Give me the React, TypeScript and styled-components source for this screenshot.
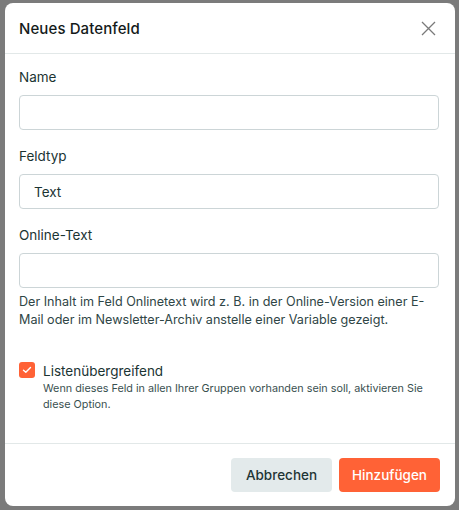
import React from "react";
import styled, { createGlobalStyle } from "styled-components";

const GlobalStyle = createGlobalStyle`
  html, body {
    margin: 0;
    padding: 0;
    background: #7b7b7b;
  }
  * { box-sizing: border-box; }
  body {
    font-family: Inter, "Noto Sans", sans-serif;
  }
`;

const Backdrop = styled.div`
  width: 459px;
  height: 510px;
  padding: 3px 4px 4px 5px;
  background: #7b7b7b;
`;

const Modal = styled.div`
  width: 450px;
  height: 503px;
  background: #fff;
  border-radius: 8px;
  display: flex;
  flex-direction: column;
  overflow: hidden;
`;

const Header = styled.div`
  height: 51px;
  padding: 0 14px;
  display: flex;
  align-items: center;
  justify-content: space-between;
  border-bottom: 1px solid #e2e8e8;
`;

const Title = styled.h2`
  margin: 0;
  font-size: 15px;
  font-weight: 500;
  color: #141a1a;
  letter-spacing: 0.1px;
`;

const CloseButton = styled.button`
  border: 0;
  background: none;
  padding: 0;
  width: 18px;
  height: 18px;
  display: flex;
  align-items: center;
  justify-content: center;
  cursor: pointer;
  margin-right: 4px;
`;

const Body = styled.div`
  flex: 1;
  padding: 13px 16px 0 14px;
  display: flex;
  flex-direction: column;
`;

const Field = styled.div`
  display: flex;
  flex-direction: column;
  margin-bottom: 16px;
`;

const Label = styled.label`
  font-size: 13.5px;
  color: #1b3433;
  line-height: 20px;
  margin-bottom: 8px;
`;

const Input = styled.div`
  height: 35px;
  border: 1px solid #ccd5d7;
  border-radius: 4px;
  padding: 0 14px;
  display: flex;
  align-items: center;
  font-size: 13.5px;
  color: #1b3433;
`;

const Help = styled.p`
  margin: 5px 0 0;
  font-size: 12.6px;
  line-height: 18px;
  color: #2f4646;
`;

const CheckRow = styled.div`
  display: flex;
  align-items: flex-start;
  gap: 8px;
  margin-top: 16px;
`;

const Box = styled.span<{ $checked: boolean }>`
  width: 16px;
  height: 16px;
  border-radius: 3px;
  flex-shrink: 0;
  margin-top: 1px;
  background: ${(p) => (p.$checked ? "#ff6236" : "#fff")};
  display: flex;
  align-items: center;
  justify-content: center;
`;

const CheckText = styled.div`
  display: flex;
  flex-direction: column;
`;

const CheckLabel = styled.span`
  font-size: 13.5px;
  line-height: 20px;
  color: #1b3433;
`;

const CheckDesc = styled.span`
  font-size: 10.8px;
  line-height: 16px;
  color: #3a5050;
`;

const Footer = styled.div`
  height: 63px;
  border-top: 1px solid #e2e8e8;
  display: flex;
  justify-content: flex-end;
  align-items: flex-start;
  gap: 7px;
  padding: 14px 15px 0;
`;

const Button = styled.button<{ $primary?: boolean }>`
  height: 34px;
  min-width: 101px;
  padding: 0 12px;
  border: 0;
  border-radius: 4px;
  font-family: inherit;
  font-size: 13.5px;
  font-weight: 500;
  cursor: pointer;
  background: ${(p) => (p.$primary ? "#ff6236" : "#e3eaeb")};
  color: ${(p) => (p.$primary ? "#fff" : "#1f3535")};
`;

export default function App() {
  return (
    <>
      <GlobalStyle />
      <Backdrop>
        <Modal>
          <Header>
            <Title>Neues Datenfeld</Title>
            <CloseButton aria-label="Schließen">
              <svg width="15" height="15" viewBox="0 0 15 15">
                <path d="M1 1L14 14M14 1L1 14" stroke="#7a7a7a" strokeWidth="1.3" fill="none" />
              </svg>
            </CloseButton>
          </Header>
          <Body>
            <Field>
              <Label>Name</Label>
              <Input />
            </Field>
            <Field>
              <Label>Feldtyp</Label>
              <Input>Text</Input>
            </Field>
            <Field>
              <Label>Online-Text</Label>
              <Input />
              <Help>
                Der Inhalt im Feld Onlinetext wird z. B. in der Online-Version einer E-Mail oder im
                Newsletter-Archiv anstelle einer Variable gezeigt.
              </Help>
            </Field>
            <CheckRow>
              <Box $checked>
                <svg width="10" height="8" viewBox="0 0 10 8">
                  <path d="M1.5 4.2L3.8 6.3L8.5 1.5" stroke="#fff" strokeWidth="1.4" fill="none" strokeLinecap="round" strokeLinejoin="round" />
                </svg>
              </Box>
              <CheckText>
                <CheckLabel>Listenübergreifend</CheckLabel>
                <CheckDesc>
                  Wenn dieses Feld in allen Ihrer Gruppen vorhanden sein soll, aktivieren Sie diese Option.
                </CheckDesc>
              </CheckText>
            </CheckRow>
          </Body>
          <Footer>
            <Button>Abbrechen</Button>
            <Button $primary>Hinzufügen</Button>
          </Footer>
        </Modal>
      </Backdrop>
    </>
  );
}
